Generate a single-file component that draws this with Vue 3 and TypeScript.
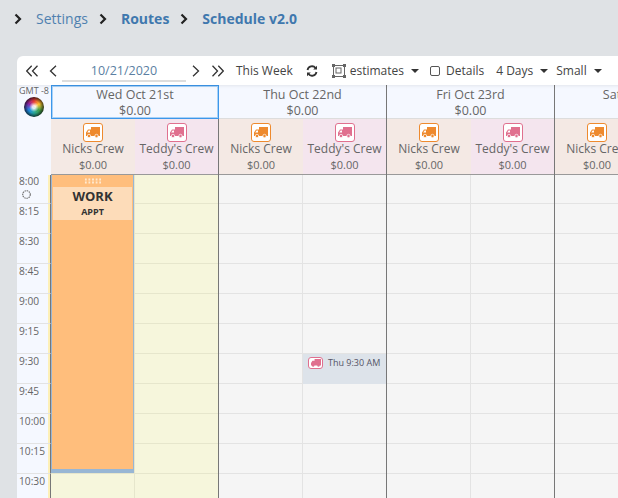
<script setup lang="ts">
interface Crew { name: string; kind: 'nicks' | 'teddy' }
const crews: Crew[] = [
  { name: 'Nicks Crew', kind: 'nicks' },
  { name: "Teddy's Crew", kind: 'teddy' },
]
const days = ['Wed Oct 21st', 'Thu Oct 22nd', 'Fri Oct 23rd', 'Sat Oct 24th']
const times = ['8:00', '8:15', '8:30', '8:45', '9:00', '9:15', '9:30', '9:45', '10:00', '10:15', '10:30']
</script>

<template>
  <div class="page">
    <nav class="crumbs">
      <span class="chev">
        <svg width="8" height="12" viewBox="0 0 8 12"><path d="M1.5 1.500 6 6l-4.500 4.500" fill="none" stroke="#222" stroke-width="2.200"/></svg>
      </span>
      <a class="crumb">Settings</a>
      <span class="chev">
        <svg width="8" height="12" viewBox="0 0 8 12"><path d="M1.5 1.500 6 6l-4.500 4.500" fill="none" stroke="#222" stroke-width="2.200"/></svg>
      </span>
      <a class="crumb strong">Routes</a>
      <span class="chev">
        <svg width="8" height="12" viewBox="0 0 8 12"><path d="M1.5 1.500 6 6l-4.500 4.500" fill="none" stroke="#222" stroke-width="2.200"/></svg>
      </span>
      <a class="crumb strong">Schedule v2.0</a>
    </nav>

    <section class="card">
      <div class="toolbar">
        <svg class="t-dbl-l" width="12" height="12" viewBox="0 0 12 12"><path d="M5.700 .8.700 6l5 5.200M11.500 .8 6.500 6l5 5.200" fill="none" stroke="#333" stroke-width="1.300"/></svg>
        <svg class="t-l" width="8" height="12" viewBox="0 0 8 12"><path d="M7 .8 1.500 6 7 11.200" fill="none" stroke="#333" stroke-width="1.300"/></svg>
        <div class="date">10/21/2020</div>
        <svg class="t-r" width="8" height="12" viewBox="0 0 8 12"><path d="M1 .8 6.500 6 1 11.200" fill="none" stroke="#333" stroke-width="1.300"/></svg>
        <svg class="t-dbl-r" width="12" height="12" viewBox="0 0 12 12"><path d="M.5 .8l5 5.200-5 5.200M6.300 .8l5 5.200-5 5.200" fill="none" stroke="#333" stroke-width="1.300"/></svg>
        <span class="t-week">This Week</span>
        <svg class="t-sync" width="12" height="12" viewBox="0 0 12 12"><path d="M1.500 5A4.600 4.600 0 0 1 9.600 3M10.500 7A4.600 4.600 0 0 1 2.400 9" fill="none" stroke="#333" stroke-width="1.800"/><path d="M11 .8V4.600H7.200zM1 11.200V7.400h3.800z" fill="#333"/></svg>
        <svg class="t-est" width="14" height="14" viewBox="0 0 14 14"><g fill="none" stroke="#666"><rect x="1.500" y="1.500" width="11" height="11"/><rect x="4" y="4" width="5" height="5"/></g><g fill="#666"><rect width="3" height="3"/><rect x="11" width="3" height="3"/><rect y="11" width="3" height="3"/><rect x="11" y="11" width="3" height="3"/></g></svg>
        <span class="t-text t-estimates">estimates</span><i class="caret"></i>
        <span class="check"></span>
        <span class="t-text t-details">Details</span>
        <span class="t-text t-days">4 Days</span><i class="caret"></i>
        <span class="t-text t-size">Small</span><i class="caret"></i>
      </div>

      <div class="cal">
        <div class="gutter">
          <div class="gmt">
            <span class="gmt-label">GMT -8</span>
            <span class="wheel"></span>
          </div>
          <div v-for="(t, i) in times" :key="t" class="time" :class="{ first: i === 0 }">
            <span>{{ t }}</span>
            <svg v-if="i === 0" class="sun" width="11" height="11" viewBox="0 0 11 11"><circle cx="5.500" cy="5.500" r="3.800" fill="none" stroke="#777" stroke-width="1.200" stroke-dasharray="1.500 .7"/></svg>
          </div>
        </div>

        <div v-for="(d, di) in days" :key="d" class="day" :class="{ first: di === 0 }">
          <div class="day-head" :class="{ active: di === 0 }">
            <div>{{ d }}</div>
            <div>$0.00</div>
          </div>
          <div class="crew-row">
            <div v-for="c in crews" :key="c.name" class="crew" :class="c.kind">
              <span class="truck-box">
                <svg width="14" height="11" viewBox="0 0 14 11"><path d="M5 0h9v9H0V5.500L2 2.500h3z" fill="currentColor"/><path d="M1.200 5.500 2.600 3.500H4v2z" fill="#fff"/><circle cx="3" cy="9" r="1.700" fill="currentColor" stroke="#fff" stroke-width=".7"/><circle cx="10.500" cy="9" r="1.700" fill="currentColor" stroke="#fff" stroke-width=".7"/></svg>
              </span>
              <div class="crew-name">{{ c.name }}</div>
              <div class="crew-amt">$0.00</div>
            </div>
          </div>
          <div class="slots">
            <div v-for="(c, ci) in crews" :key="c.name" class="slot-col" :class="{ open: di === 0 }">
              <div v-for="t in times" :key="t" class="slot"></div>
              <div v-if="di === 0 && ci === 0" class="appt">
                <div class="grip"></div>
                <div class="appt-body">
                  <div class="appt-title">WORK</div>
                  <div class="appt-sub">APPT</div>
                </div>
              </div>
              <div v-if="di === 1 && ci === 1" class="hover-slot">
                <span class="truck-box mini">
                  <svg width="10" height="8" viewBox="0 0 14 11"><path d="M5 0h9v9H0V5.500L2 2.500h3z" fill="currentColor"/><circle cx="3" cy="9" r="1.700" fill="currentColor"/><circle cx="10.500" cy="9" r="1.700" fill="currentColor"/></svg>
                </span>
                <span>Thu 9:30 AM</span>
              </div>
            </div>
          </div>
        </div>
      </div>
    </section>
  </div>
</template>

<style>
html, body { margin: 0; height: 100%; overflow: hidden; background: #dfe2e5; }
</style>

<style scoped>
.page {
  width: 618px; height: 498px; overflow: hidden; background: #dfe2e5;
  font-family: "Open Sans", sans-serif; color: #555; box-sizing: border-box;
}
.crumbs { display: flex; align-items: center; height: 37px; padding-left: 14px; font-size: 14px; }
.chev { display: flex; width: 8px; }
.crumb { color: #4f81b0; margin: 0 11px 0 14px; white-space: nowrap; }
.crumb.strong { font-weight: 700; color: #3f78ae; margin-left: 14px; }
.card { margin: 19px 0 0 17px; width: 720px; background: #fff; border-radius: 6px 0 0 0; overflow: hidden; }
.toolbar { height: 29px; display: flex; align-items: center; font-size: 12px; color: #444; white-space: nowrap; box-shadow: 0 1px 3px rgba(0,0,0,.08); position: relative; z-index: 2; }
.t-dbl-l { margin-left: 9px; }
.t-l { margin-left: 11px; }
.date { width: 124px; margin-left: 5px; height: 23px; line-height: 23px; box-sizing: border-box; text-align: center; font-size: 12.500px; color: #5b7fa3; border-bottom: 2px solid #ddd; }
.t-r { margin-left: 6px; }
.t-dbl-r { margin-left: 12px; }
.t-week { margin-left: 12px; }
.t-sync { margin-left: 13px; }
.t-est { margin-left: 14px; }
.t-text { margin-left: 5px; }
.t-estimates { margin-left: 4px; }
.caret { width: 0; height: 0; border: 4px solid transparent; border-top: 4px solid #333; border-bottom: 0; margin-left: 7px; }
.check { width: 8px; height: 8px; border: 1px solid #555; border-radius: 2px; margin-left: 11px; background: #fff; }
.t-details { margin-left: 6px; }
.t-days { margin-left: 12px; }
.t-size { margin-left: 8px; }

.cal { display: flex; }
.gutter { width: 34px; flex: none; background: #f5f8ff; }
.gmt { height: 90px; display: flex; flex-direction: column; align-items: center; }
.gmt-label { font-size: 9px; line-height: 12px; white-space: nowrap; color: #666; }
.wheel { width: 20px; height: 20px; border-radius: 50%; background: radial-gradient(circle, rgba(255,255,255,.85) 0 1.500px, transparent 5px), radial-gradient(circle, transparent 6px, rgba(0,0,0,.7) 10px), conic-gradient(#e53935, #fbc02d, #43a047, #26a69a, #1e88e5, #8e24aa, #e53935); }
.time { height: 30px; box-sizing: border-box; border-bottom: 1px solid #e3e3e3; border-right: 1px solid #777; box-shadow: inset -2px 0 #fdf0b8; font-size: 10.200px; line-height: 13px; padding: 1px 0 0 2px; color: #666; }
.time.first { height: 29px; padding-top: 0; }
.sun { display: block; margin: 1px 0 0 2px; }

.day { width: 168px; flex: none; box-sizing: border-box; border-left: 1px solid #777; }
.day.first { width: 167px; border-left: 0; }
.day-head { height: 34px; box-sizing: border-box; padding-top: 2px; background: #f5f8ff; text-align: center; font-size: 12.500px; line-height: 16px; color: #666; border-bottom: 1px solid #ddd; }
.day-head.active { border: 1px solid #3d97ea; box-shadow: inset 0 0 0 1px #a8d2f8; padding-top: 1px; margin-right: -1px; position: relative; z-index: 1; }
.crew-row { display: flex; height: 56px; box-sizing: border-box; border-bottom: 1px solid #999; }
.crew { width: 84px; text-align: center; display: flex; flex-direction: column; align-items: center; padding-top: 4px; box-sizing: border-box; }
.crew + .crew { width: 83px; }
.crew.nicks { background: #f4e9e4; color: #ee8a2e; }
.crew.teddy { background: #f4e5ee; color: #e0708f; }
.truck-box { display: flex; align-items: center; justify-content: center; width: 20px; height: 19px; box-sizing: border-box; border: 1px solid currentColor; border-radius: 3px; background: #fff; }
.crew-name { font-size: 12px; line-height: 16px; margin-top: -1px; color: #666; white-space: nowrap; }
.crew-amt { font-size: 11px; line-height: 14px; margin-top: 1px; color: #666; }
.slots { display: flex; }
.slot-col { width: 84px; box-sizing: border-box; position: relative; background: #f5f5f5; border-right: 1px solid #e3e3e3; }
.slot-col + .slot-col { width: 83px; border-right: 0; }
.slot-col.open { background: #f6f6dc; border-right-color: #e6e6cc; }
.slot { height: 30px; box-sizing: border-box; border-bottom: 1px solid #e3e3e3; }
.slot:first-child { height: 29px; }
.open .slot { border-color: #e6e6cc; }
.appt { position: absolute; left: 0; top: 0; width: 83px; height: 298px; box-sizing: border-box; background: #ffbe7c; border: solid #98b6d4; border-width: 0 1px 4px 1px; }
.grip { height: 6px; width: 18px; margin: 3px auto 3px; background-image: radial-gradient(circle, #ffe9d0 1px, transparent 1.200px); background-size: 3.600px 3px; }
.appt-body { height: 33px; margin: 0 1px; background: #fddcb9; text-align: center; color: #333; font-weight: 700; }
.appt-title { font-size: 13px; line-height: 19px; }
.appt-sub { font-size: 9px; line-height: 12px; }
.hover-slot { position: absolute; left: 0; top: 179px; width: 83px; height: 30px; background: #dde3ea; display: flex; align-items: flex-start; padding: 3px 0 0 5px; box-sizing: border-box; font-size: 9px; line-height: 12px; color: #556; white-space: nowrap; gap: 5px; }
.truck-box.mini { width: 15px; height: 12px; color: #e0708f; border-width: 1px; }
</style>
